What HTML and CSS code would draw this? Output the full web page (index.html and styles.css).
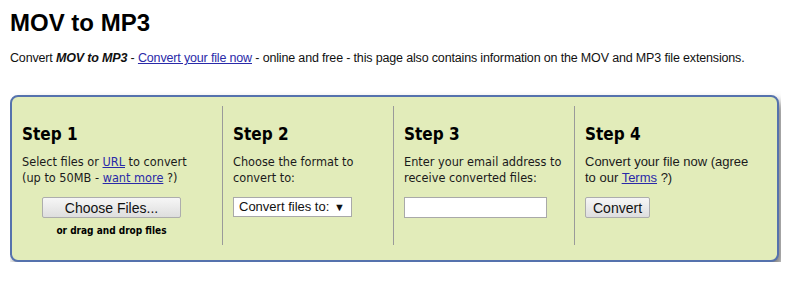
FILE: index.html
```html
<!DOCTYPE html>
<html lang="en">

<head>
  <meta charset="UTF-8">
  <title>MOV to MP3</title>
  <link rel="stylesheet" href="styles.css">
</head>

<body>
  <h1 class="title">MOV to MP3</h1>
  <p class="intro">Convert <b><i>MOV to MP3</i></b> - <a href="#">Convert your file now</a> - online and free - this page also contains information on the MOV and MP3 file extensions.</p>

  <div class="steps">
    <div class="step">
      <h2>Step 1</h2>
      <p>Select files or <a href="#">URL</a> to convert<br>(up to 50MB - <a href="#">want more</a> ?)</p>
      <div class="center">
        <button class="btn choose">Choose Files...</button>
        <div class="drop">or drag and drop files</div>
      </div>
    </div>
    <div class="step">
      <h2>Step 2</h2>
      <p>Choose the format to<br>convert to:</p>
      <div class="select">Convert files to: <span class="arrow">&#9660;</span></div>
    </div>
    <div class="step">
      <h2>Step 3</h2>
      <p>Enter your email address to<br>receive converted files:</p>
      <input class="email" type="text">
    </div>
    <div class="step last">
      <h2>Step 4</h2>
      <p class="arial">Convert your file now (agree<br>to our <a href="#">Terms</a> ?)</p>
      <button class="btn">Convert</button>
    </div>
  </div>
</body>

</html>
```

FILE: styles.css
```css
* {
  margin: 0;
  padding: 0;
  box-sizing: border-box;
}

body {
  margin: 0 10px;
  font-family: "Liberation Sans", Arial, sans-serif;
  color: #000;
  background: #fff;
}

a {
  color: #2a2aa8;
}

.title {
  font-size: 24px;
  line-height: 28px;
  padding-top: 9px;
}

.intro {
  font-size: 12.5px;
  letter-spacing: -0.16px;
  line-height: 16px;
  margin-top: 13px;
  color: #111;
  white-space: nowrap;
}

.steps {
  display: grid;
  grid-template-columns: 211px 171px 181px 1fr;
  width: 769px;
  height: 167px;
  margin-top: 29px;
  padding: 9px 0 15px 0;
  background: #e2ecba;
  border: 2px solid #5572ad;
  border-radius: 8px;
  box-shadow: 4px 6px 8px rgba(0, 0, 0, 0.5);
}

.step {
  padding: 0 4px 0 10px;
  border-right: 1px solid #9a9a9a;
  font-family: "DejaVu Sans Condensed", "Liberation Sans", sans-serif;
  font-size: 12.6px;
  line-height: 16px;
  color: #1a1a1a;
}

.step.last {
  border-right: none;
}

.step h2 {
  font-size: 17px;
  line-height: 20px;
  margin-top: 18px;
  color: #000;
}

.step p {
  margin-top: 10px;
  white-space: nowrap;
}

.step p.arial {
  font-family: "Liberation Sans", Arial, sans-serif;
  font-size: 13px;
}

.center {
  width: 179px;
  text-align: center;
}

.btn {
  display: inline-block;
  height: 21px;
  padding: 0 7px;
  margin-top: 11px;
  font-family: "Liberation Sans", Arial, sans-serif;
  font-size: 14px;
  color: #111;
  background: linear-gradient(#f6f6f6, #dedede);
  border: 1px solid #adadad;
  border-radius: 2px;
}

.btn.choose {
  width: 139px;
}

.drop {
  margin-top: 5px;
  font-size: 10px;
  font-weight: bold;
  color: #000;
}

.select {
  display: flex;
  align-items: center;
  justify-content: space-between;
  height: 20px;
  width: 119px;
  margin-top: 11px;
  padding: 0 6px 0 5px;
  font-family: "Liberation Sans", Arial, sans-serif;
  font-size: 13px;
  color: #111;
  white-space: nowrap;
  background: #fff;
  border: 1px solid #a9a9a9;
}

.select .arrow {
  font-size: 11px;
}

.email {
  display: block;
  width: 143px;
  height: 21px;
  margin-top: 11px;
  background: #fff;
  border: 1px solid #a9a9a9;
}
```
